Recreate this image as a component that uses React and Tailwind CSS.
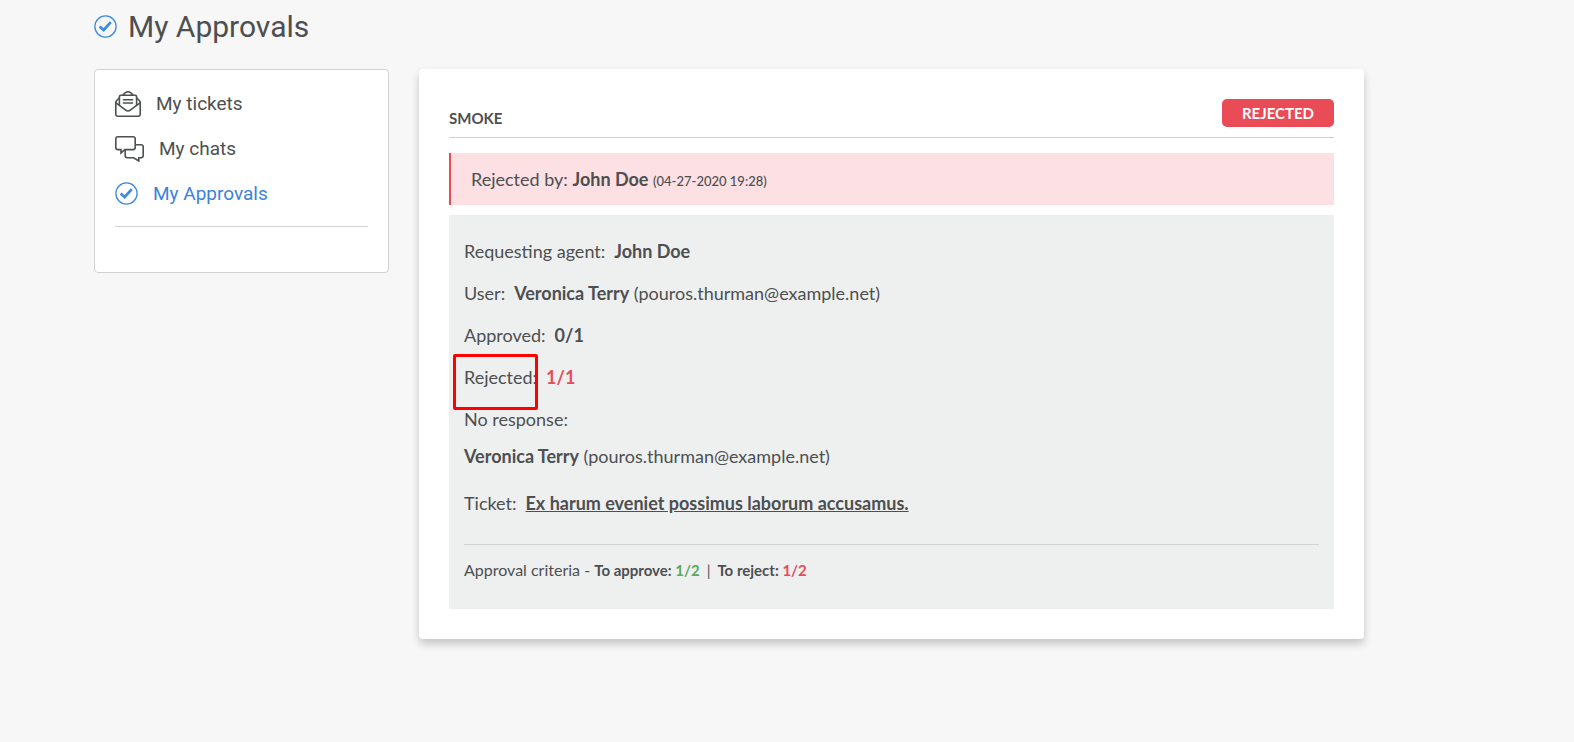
function CheckCircle() {
  return (
    <svg className="size-[23px] shrink-0" viewBox="0 0 23 23" fill="none" stroke="#3b8ae2" aria-hidden="true">
      <circle cx="11.5" cy="11.5" r="10.6" strokeWidth="1.3" />
      <path d="M5.6 11.4 L9.7 15 L16.8 7.2" strokeWidth="2.7" />
    </svg>
  );
}

function Envelope() {
  return (
    <svg className="h-[26px] w-[26px] shrink-0" viewBox="0 0 26 26" fill="none" stroke="#4d4f50" strokeWidth="1.6" strokeLinejoin="round" strokeLinecap="round" aria-hidden="true">
      <path d="M4.4 6.8 L1.5 9.8 Q.8 10.6 .8 11.6 V23.6 Q.8 25.2 2.4 25.2 H23.6 Q25.2 25.2 25.2 23.6 V11.6 Q25.2 10.6 24.5 9.8 L21.6 6.8" />
      <path d="M1 11.8 L10.7 19.2 Q13 20.9 15.3 19.2 L25 11.8" />
      <path d="M4.4 14 V5.8 Q4.4 4.2 6 4.2 H20 Q21.6 4.2 21.6 5.8 V14" />
      <path d="M8.2 4 Q10.2 .8 13 .8 Q15.8 .8 17.8 4" />
      <path d="M8.4 8.8 H17.6 M8.4 12 H17.6" />
    </svg>
  );
}

function Chats() {
  return (
    <svg className="h-[26px] w-[29px] shrink-0" viewBox="0 0 29 26" fill="none" stroke="#4d4f50" strokeWidth="1.6" strokeLinejoin="miter" aria-hidden="true">
      <path d="M3 .8 H18 Q20.2 .8 20.2 3 V11.4 Q20.2 13.6 18 13.6 H9.8 L6 17 V13.6 H3 Q.8 13.6 .8 11.4 V3 Q.8 .8 3 .8 Z" />
      <path d="M20.4 8.8 H26 Q28.2 8.8 28.2 11 V19.6 Q28.2 21.8 26 21.8 H23.8 V25 L18.6 21.8 H12.4 Q10.2 21.8 10.2 19.6 V14" />
    </svg>
  );
}

const navItems = [
  { label: "My tickets", Icon: Envelope, color: "text-[#4d4f50]" },
  { label: "My chats", Icon: Chats, color: "text-[#4d4f50]" },
  { label: "My Approvals", Icon: CheckCircle, color: "text-[#3b82dc]" },
];

function Row({ label, children }) {
  return (
    <div className="relative flex h-[42px] items-center gap-[9px]">
      <span>{label}</span>
      {children}
    </div>
  );
}

export default function App() {
  return (
    <div className="min-h-screen bg-[#f7f7f7] pr-[210px] pb-12 pl-[94px] font-['Lato',sans-serif] text-lg text-[#4d4f50]">
      <header className="flex h-[69px] items-start gap-[11px] pt-[6px] font-['Roboto',sans-serif]">
        <span className="flex h-10 items-center">
          <CheckCircle />
        </span>
        <h1 className="text-[30px] leading-[42px]">My Approvals</h1>
      </header>

      <div className="flex items-start gap-[30px]">
        <aside className="w-[295px] shrink-0 rounded border border-[#cfd3d3] bg-white px-5 pt-[11px] pb-[45px] font-['Roboto',sans-serif]">
          <nav className="border-b border-[#d0d4d4] pb-[10px]">
            <ul>
              {navItems.map(({ label, Icon, color }) => (
                <li key={label}>
                  <a href="#" className={`flex h-[45px] items-center gap-[15px] text-[19px] ${color}`}>
                    <Icon />
                    {label}
                  </a>
                </li>
              ))}
            </ul>
          </nav>
        </aside>

        <main className="min-w-0 flex-1 rounded bg-white p-[30px] shadow-[0_5px_8px_rgba(0,0,0,0.2)]">
          <div className="flex h-[39px] items-start justify-between border-b border-[#d0d2d2]">
            <h2 className="pt-[7px] text-[15px] leading-6 font-bold">SMOKE</h2>
            <span className="rounded-[5px] bg-[#e94b57] px-5 text-[15px] leading-[28px] font-bold text-white">REJECTED</span>
          </div>

          <div className="mt-[15px] flex h-[52px] items-center border-l-2 border-[#e94b57] bg-[#fce0e3] px-5">
            <p>
              Rejected by: <strong>John Doe</strong> <span className="text-[13px] font-medium">(04-27-2020 19:28)</span>
            </p>
          </div>

          <section className="mt-[10px] bg-[#eef0f0] px-[15px] pt-[15px] pb-[27px]">
            <Row label="Requesting agent:">
              <strong>John Doe</strong>
            </Row>
            <Row label="User:">
              <span>
                <strong>Veronica Terry</strong> (pouros.thurman@example.net)
              </span>
            </Row>
            <Row label="Approved:">
              <strong>0/1</strong>
            </Row>
            <Row label="Rejected:">
              <strong className="text-[#e94b57]">1/1</strong>
              <span className="absolute -top-[2px] -left-[11px] h-[56px] w-[85px] rounded-xs border-3 border-[#ff0000]" />
            </Row>
            <Row label="No response:" />
            <p className="leading-8">
              <strong>Veronica Terry</strong> (pouros.thurman@example.net)
            </p>
            <div className="mt-[10px] border-b border-[#d0d4d4] pb-5">
              <Row label="Ticket:">
                <a href="#" className="font-bold underline">
                  Ex harum eveniet possimus laborum accusamus.
                </a>
              </Row>
            </div>
            <p className="pt-[13px] text-base leading-6">
              Approval criteria -{" "}
              <span className="text-[15px]">
                <strong>To approve: <span className="text-[#56ab5c]">1/2</span></strong>
                <span className="px-[7px]">|</span>
                <strong>To reject: <span className="text-[#e94b57]">1/2</span></strong>
              </span>
            </p>
          </section>
        </main>
      </div>
    </div>
  );
}
